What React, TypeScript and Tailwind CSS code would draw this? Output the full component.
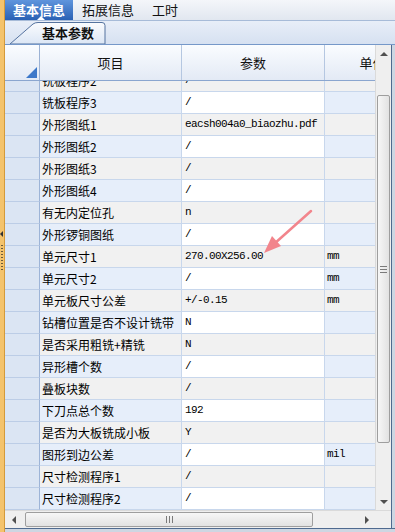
import React from 'react';

type Row = { name: string; value: string; unit: string };

const rows: Row[] = [
  { name: '铣板程序2', value: '/', unit: '' },
  { name: '铣板程序3', value: '/', unit: '' },
  { name: '外形图纸1', value: 'eacsh004a0_biaozhu.pdf', unit: '' },
  { name: '外形图纸2', value: '/', unit: '' },
  { name: '外形图纸3', value: '/', unit: '' },
  { name: '外形图纸4', value: '/', unit: '' },
  { name: '有无内定位孔', value: 'n', unit: '' },
  { name: '外形锣铜图纸', value: '/', unit: '' },
  { name: '单元尺寸1', value: '270.00X256.00', unit: 'mm' },
  { name: '单元尺寸2', value: '/', unit: 'mm' },
  { name: '单元板尺寸公差', value: '+/-0.15', unit: 'mm' },
  { name: '钻槽位置是否不设计铣带', value: 'N', unit: '' },
  { name: '是否采用粗铣+精铣', value: 'N', unit: '' },
  { name: '异形槽个数', value: '/', unit: '' },
  { name: '叠板块数', value: '/', unit: '' },
  { name: '下刀点总个数', value: '192', unit: '' },
  { name: '是否为大板铣成小板', value: 'Y', unit: '' },
  { name: '图形到边公差', value: '/', unit: 'mil' },
  { name: '尺寸检测程序1', value: '/', unit: '' },
  { name: '尺寸检测程序2', value: '/', unit: '' },
];

const mono = "font-['Liberation_Mono','DejaVu_Sans_Mono',monospace] text-[11px] tracking-[-0.6px]";

function GridRow({ row, index }: { row: Row; index: number }) {
  const light = index % 2 === 1;
  const side = light ? 'bg-[#e6eefa]' : 'bg-[#f1f1f1]';
  const mid = light ? 'bg-white' : 'bg-[#f1f1f1]';
  return (
    <div className="flex h-[22px]">
      <div className="w-[35px] shrink-0 bg-[#dbe5f3] border-r border-r-[#9db4d7] border-b border-b-[#bccde6]" />
      <div className={`w-[142px] shrink-0 pl-[2px] flex items-center text-[12px] text-black whitespace-nowrap overflow-hidden border-r border-b border-[#c8d7ec] ${side}`}>
        {row.name}
      </div>
      <div className={`w-[143px] shrink-0 pl-[3px] flex items-center text-black whitespace-nowrap overflow-hidden border-r border-b border-[#c8d7ec] ${mono} ${mid}`}>
        {row.value}
      </div>
      <div className={`w-[95px] shrink-0 pl-[2px] flex items-center text-black border-r border-b border-[#c8d7ec] ${mono} ${side}`}>
        {row.unit}
      </div>
    </div>
  );
}

function VScrollbar() {
  return (
    <div className="w-[16px] shrink-0 flex flex-col bg-[#efefef] border-l border-[#dadada]">
      <div className="h-[17px] flex items-center justify-center">
        <div className="w-0 h-0 border-x-[4px] border-x-transparent border-b-[4px] border-b-[#505050]" />
      </div>
      <div className="h-[33px]" />
      <div className="h-[348px] mx-[1px] rounded-[2px] border border-[#9e9e9e] bg-gradient-to-r from-[#f7f7f7] to-[#e2e2e2] flex flex-col items-center justify-center gap-[2px]">
        <div className="w-[7px] h-px bg-[#7a7a7a]" />
        <div className="w-[7px] h-px bg-[#7a7a7a]" />
        <div className="w-[7px] h-px bg-[#7a7a7a]" />
      </div>
      <div className="flex-1" />
      <div className="h-[17px] flex items-center justify-center">
        <div className="w-0 h-0 border-x-[4px] border-x-transparent border-t-[4px] border-t-[#505050]" />
      </div>
    </div>
  );
}

function HScrollbar() {
  return (
    <div className="flex-1 flex bg-[#efefef] border-t border-[#dadada]">
      <div className="w-[17px] flex items-center justify-center">
        <div className="w-0 h-0 border-y-[4px] border-y-transparent border-r-[4px] border-r-[#505050]" />
      </div>
      <div className="w-[3px]" />
      <div className="w-[288px] my-[1px] rounded-[2px] border border-[#9e9e9e] bg-gradient-to-b from-[#f7f7f7] to-[#e2e2e2] flex items-center justify-center gap-[2px]">
        <div className="w-px h-[7px] bg-[#7a7a7a]" />
        <div className="w-px h-[7px] bg-[#7a7a7a]" />
        <div className="w-px h-[7px] bg-[#7a7a7a]" />
      </div>
      <div className="flex-1" />
      <div className="w-[17px] flex items-center justify-center">
        <div className="w-0 h-0 border-y-[4px] border-y-transparent border-l-[4px] border-l-[#505050]" />
      </div>
    </div>
  );
}

export default function App() {
  return (
    <div className="relative w-[395px] h-[532px] overflow-hidden flex bg-[#dfe7f3] font-['Noto_Sans_CJK_SC','Noto_Sans',sans-serif]">
      {/* splitter strip */}
      <div className="w-[5px] shrink-0 bg-[#f4c36c] border-r border-[#d49a3a] flex flex-col items-start pt-[231px]">
        <div className="w-0 h-0 border-y-[3px] border-y-transparent border-r-[3px] border-r-[#333]" />
        <div className="mt-[8px] ml-px flex flex-col gap-[2px]">
          {Array.from({ length: 9 }).map((_, i) => (
            <div key={i} className="w-[2px] h-px bg-[#6b5a3a]" />
          ))}
        </div>
      </div>

      <div className="flex-1 min-w-0 flex flex-col">
        {/* top tabs */}
        <div className="h-[21px] shrink-0 flex bg-gradient-to-b from-[#f4f6fa] to-[#e1e7f0] border-b border-[#a7bbd8] text-[13px]">
          <div className="relative w-[68px] flex items-center justify-center font-bold text-white bg-gradient-to-b from-[#5f95dd] to-[#2a61b4]">
            基本信息
            <div className="absolute bottom-0 left-[32px] w-0 h-0 border-x-[4px] border-x-transparent border-b-[4px] border-b-white" />
          </div>
          <div className="ml-[9px] flex items-center text-[#111]">拓展信息</div>
          <div className="ml-[18px] flex items-center text-[#111]">工时</div>
        </div>

        {/* sub tabs */}
        <div className="h-[23px] shrink-0 flex bg-gradient-to-b from-[#e8eef8] to-[#d6e1f1] pl-[4px]">
          <div className="relative w-[98px] h-full flex items-center pl-[33px] text-[13px] font-bold text-[#111]">
            <svg className="absolute inset-0" width="98" height="23" viewBox="0 0 98 23">
              <defs>
                <linearGradient id="tabg" x1="0" y1="0" x2="0" y2="1">
                  <stop offset="0" stopColor="#fbfcfe" />
                  <stop offset="1" stopColor="#dbe6f5" />
                </linearGradient>
              </defs>
              <path d="M1 23 L24 3 Q26 1.5 29 1.5 L93 1.5 Q96 1.5 96 4.5 L96 23 Z" fill="url(#tabg)" stroke="#55739f" strokeWidth="1" />
            </svg>
            <span className="relative">基本参数</span>
          </div>
        </div>

        {/* grid frame */}
        <div className="flex-1 min-h-0 flex flex-col border-t border-[#7598c9]">
          <div className="flex-1 min-h-0 flex">
            <div className="flex-1 min-w-0 overflow-hidden flex flex-col">
              <div className="w-[415px] h-[36px] shrink-0 flex bg-gradient-to-b from-[#fafcff] to-[#e3eaf5] border-b border-[#8ba6cf] text-[13px] text-[#111]">
                <div className="relative w-[35px] border-r border-[#9cb2d4]">
                  <svg className="absolute right-[2px] bottom-[2px]" width="11" height="11" viewBox="0 0 11 11">
                    <path d="M11 0 L11 11 L0 11 Z" fill="#3d78c9" />
                  </svg>
                </div>
                <div className="w-[142px] flex items-center justify-center border-r border-[#b5c7e1]">项目</div>
                <div className="w-[143px] flex items-center justify-center border-r border-[#b5c7e1]">参数</div>
                <div className="w-[95px] flex items-center justify-center">单位</div>
              </div>
              <div className="flex-1 min-h-0 overflow-hidden">
                <div className="w-[415px] -mt-[11px]">
                  {rows.map((r, i) => (
                    <GridRow key={r.name} row={r} index={i} />
                  ))}
                </div>
              </div>
            </div>
            <VScrollbar />
            <div className="w-[4px] shrink-0 border-l border-[#4f6a8f] bg-[#cdd6e2]" />
          </div>
          <div className="h-[18px] shrink-0 flex">
            <HScrollbar />
            <div className="w-[16px] bg-[#efefef] border-t border-[#dadada]" />
            <div className="w-[4px] border-l border-[#4f6a8f] bg-[#cdd6e2]" />
          </div>
          <div className="h-[4px] shrink-0 border-t border-[#4f6a8f] bg-[#cdd6e2]" />
        </div>
      </div>

      {/* annotation arrow */}
      <svg className="absolute inset-0 pointer-events-none" width="395" height="532" viewBox="0 0 395 532">
        <line x1="311" y1="211" x2="274" y2="244" stroke="#f2858c" strokeWidth="2.5" strokeLinecap="round" />
        <polygon points="264,253 281,246 272,236" fill="#f2858c" />
      </svg>
    </div>
  );
}
